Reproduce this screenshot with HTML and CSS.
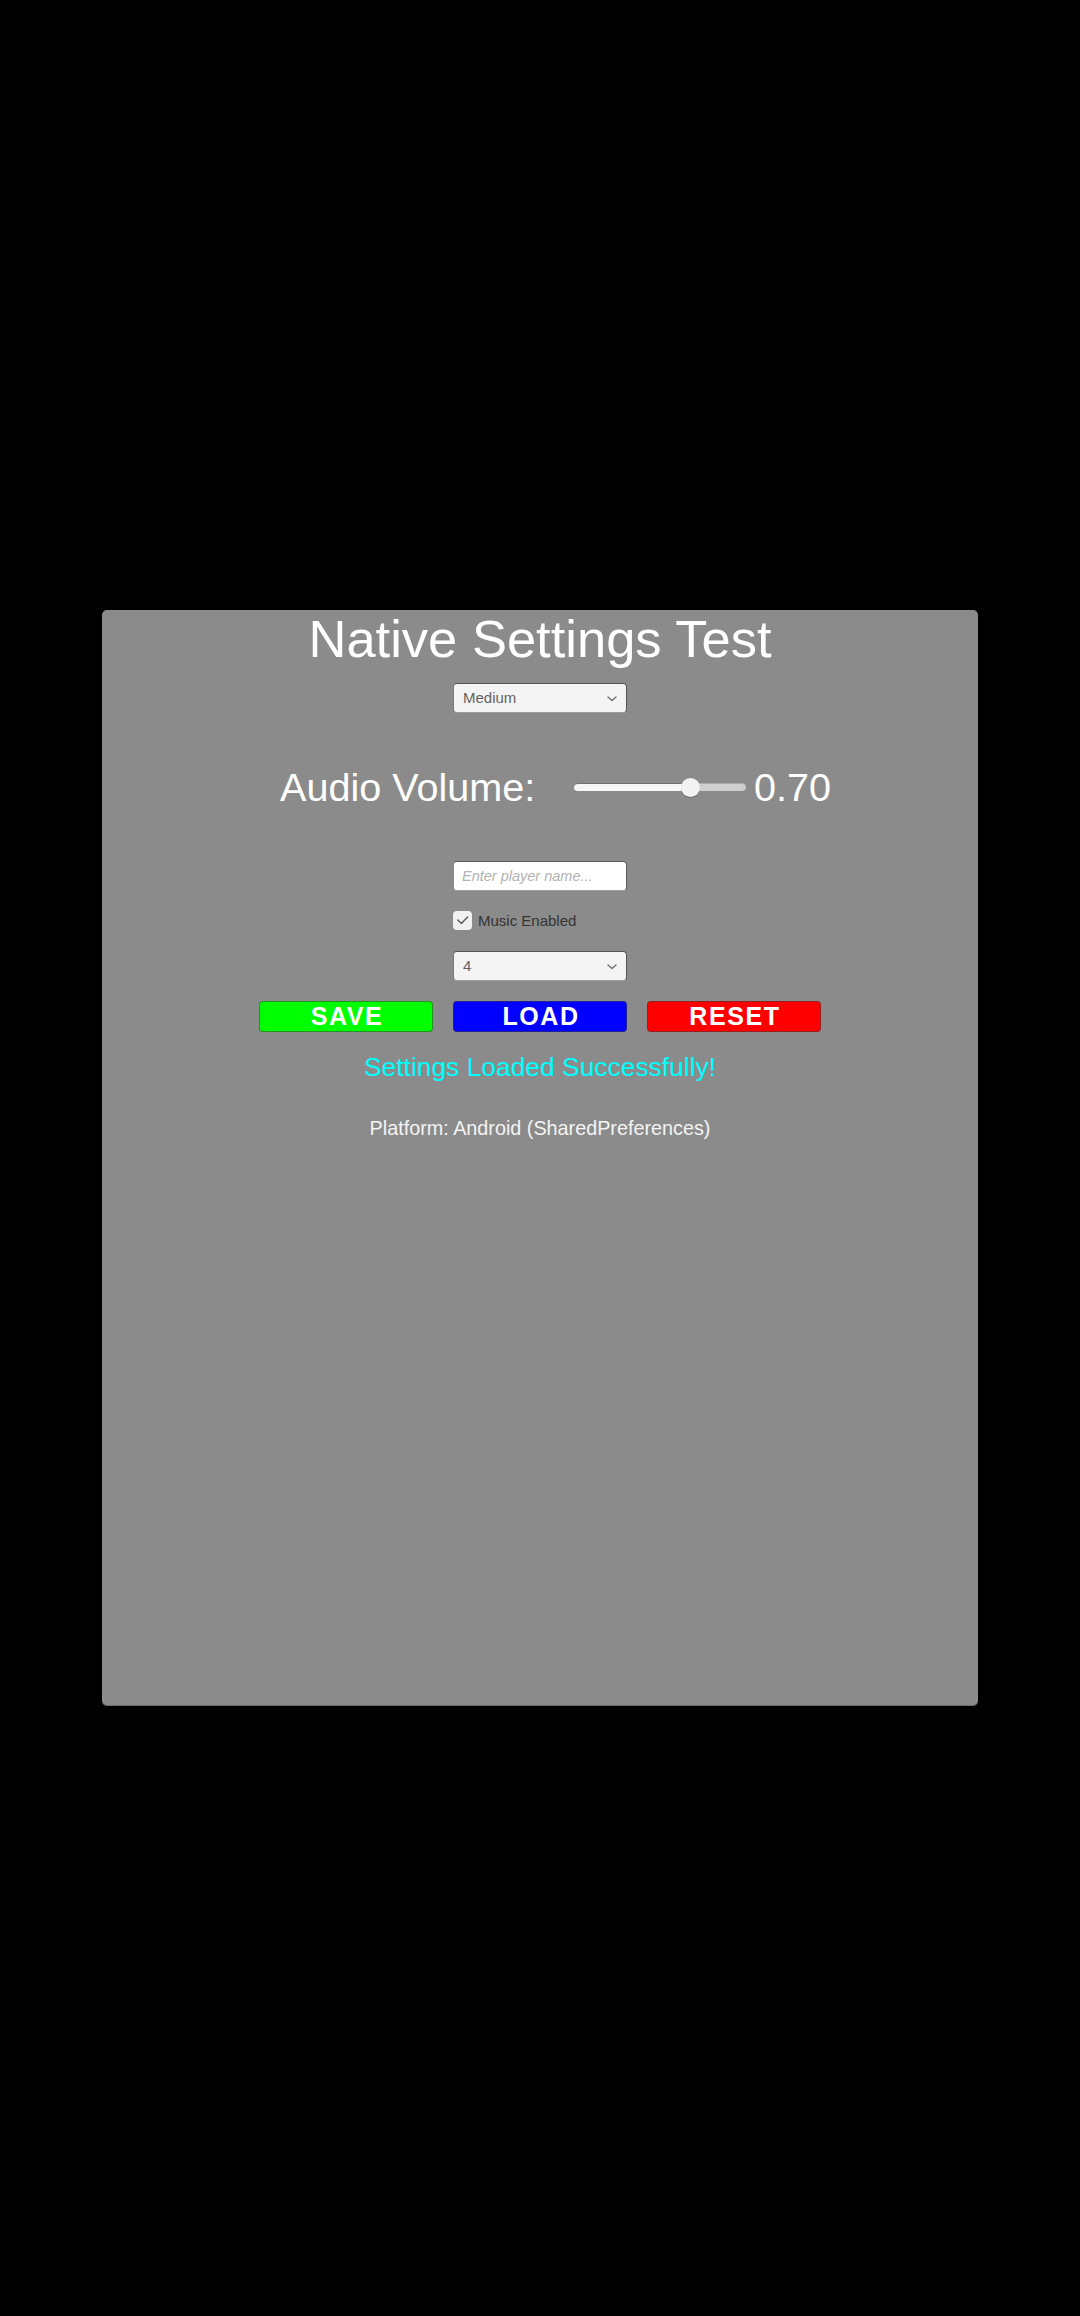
FILE: index.html
```html
<!DOCTYPE html>
<html lang="en">
<head>
<meta charset="utf-8">
<title>Native Settings Test</title>
<link rel="stylesheet" href="styles.css">
</head>
<body>
<div class="screen">
  <div class="panel">
    <h1 class="title">Native Settings Test</h1>

    <div class="dropdown dd-first">
      <span class="dd-label">Medium</span>
      <svg class="chev" viewBox="0 0 10 6" width="10" height="6"><path d="M1 1 L5 4.6 L9 1" fill="none" stroke="#6e6e6e" stroke-width="1.3" stroke-linecap="round" stroke-linejoin="round"/></svg>
    </div>

    <div class="audio-row">
      <span class="audio-label">Audio Volume:</span>
      <div class="slider" style="--v:0.7">
        <div class="slider-fill"></div>
        <div class="slider-handle"></div>
      </div>
      <span class="audio-value">0.70</span>
    </div>

    <div class="input">
      <span class="placeholder">Enter player name...</span>
    </div>

    <div class="toggle-row">
      <span class="checkbox">
        <svg viewBox="0 0 19 19" width="19" height="19"><path d="M4.8 9 L8.4 12.6 L14.6 6" fill="none" stroke="#5a5a5a" stroke-width="1.4" stroke-linecap="round" stroke-linejoin="round"/></svg>
      </span>
      <span class="toggle-label">Music Enabled</span>
    </div>

    <div class="dropdown dd-second">
      <span class="dd-label">4</span>
      <svg class="chev" viewBox="0 0 10 6" width="10" height="6"><path d="M1 1 L5 4.6 L9 1" fill="none" stroke="#6e6e6e" stroke-width="1.3" stroke-linecap="round" stroke-linejoin="round"/></svg>
    </div>

    <div class="buttons">
      <div class="btn btn-save">SAVE</div>
      <div class="btn btn-load">LOAD</div>
      <div class="btn btn-reset">RESET</div>
    </div>

    <p class="status">Settings Loaded Successfully!</p>
    <p class="platform">Platform: Android (SharedPreferences)</p>
  </div>
</div>
</body>
</html>
```

FILE: styles.css
```css
html, body {
  margin: 0;
  padding: 0;
  background: #000;
}

body {
  width: 1080px;
  height: 2316px;
  overflow: hidden;
  font-family: "Liberation Sans", Arial, sans-serif;
}

.screen {
  padding-top: 610px;
}

.panel {
  box-sizing: border-box;
  margin-left: 102px;
  width: 876px;
  height: 1096px;
  background: #8b8b8b;
  border-radius: 5px;
  box-shadow: inset 0 -1px 0 rgba(0, 0, 0, 0.22);
  padding-top: 3px;
  display: flex;
  flex-direction: column;
  align-items: center;
}

.title {
  margin: 0;
  font-size: 52.5px;
  line-height: 52px;
  font-weight: normal;
  color: #ffffff;
  text-align: center;
}

.dropdown {
  box-sizing: border-box;
  width: 174px;
  height: 30px;
  background: #f4f4f4;
  border-radius: 4px;
  border: 1px solid #555;
  border-bottom-color: #9c9c9c;
  border-left-color: #7a7a7a;
  display: flex;
  align-items: center;
  justify-content: space-between;
  padding: 0 9px 0 9px;
}

.dd-first {
  margin-top: 18px;
}

.dd-second {
  margin-top: 21px;
}

.dd-label {
  font-size: 15px;
  line-height: 28px;
  color: #636363;
}

.chev {
  display: block;
  margin-top: 1px;
}

.audio-row {
  align-self: stretch;
  margin-top: 51px;
  height: 46px;
  padding-left: 178px;
  display: flex;
  align-items: center;
}

.audio-label {
  width: 294px;
  font-size: 39.6px;
  line-height: 46px;
  color: #ffffff;
  white-space: nowrap;
}

.slider {
  position: relative;
  width: 172px;
  height: 8px;
  border-radius: 4px;
  background: #cfcfcf;
  box-shadow: inset 0 1px 0 rgba(0, 0, 0, 0.18);
}

.slider-fill {
  height: 8px;
  width: calc(10px + var(--v) * (100% - 20px));
  border-radius: 4px;
  background: #f6f6f6;
  box-shadow: inset 0 1px 0 rgba(0, 0, 0, 0.55);
}

.slider-handle {
  position: absolute;
  top: -5.5px;
  left: calc(0.5px + var(--v) * (100% - 20px));
  width: 19px;
  height: 19px;
  border-radius: 50%;
  background: #f2f2f2;
  box-shadow: 0 1px 0 rgba(0, 0, 0, 0.25);
}

.audio-value {
  margin-left: 8px;
  font-size: 39.6px;
  line-height: 46px;
  color: #ffffff;
}

.input {
  box-sizing: border-box;
  margin-top: 51px;
  width: 174px;
  height: 30px;
  background: #ffffff;
  border-radius: 4px;
  border: 1px solid #5a5a5a;
  border-bottom-color: #a0a0a0;
  border-left-color: #8a8a8a;
  display: flex;
  align-items: center;
  padding-left: 8px;
}

.placeholder {
  font-size: 14.5px;
  font-style: italic;
  color: #b2b2b2;
  white-space: nowrap;
}

.toggle-row {
  margin-top: 20px;
  width: 174px;
  height: 19px;
  display: flex;
  align-items: center;
}

.checkbox {
  width: 19px;
  height: 19px;
  border-radius: 4px;
  background: #f1f1f1;
  display: block;
}

.checkbox svg {
  display: block;
}

.toggle-label {
  margin-left: 6px;
  font-size: 15px;
  color: #343434;
  white-space: nowrap;
}

.buttons {
  margin-top: 20px;
  display: flex;
  gap: 20px;
}

.btn {
  box-sizing: border-box;
  width: 174px;
  height: 31px;
  border-radius: 4px;
  border: 1px solid rgba(60, 60, 60, 0.55);
  display: flex;
  align-items: center;
  justify-content: center;
  padding-left: 2px;
  font-size: 25px;
  font-weight: bold;
  letter-spacing: 1.6px;
  color: #ffffff;
}

.btn-save {
  background: #00ff00;
}

.btn-load {
  background: #0000ff;
}

.btn-reset {
  background: #ff0000;
}

.status {
  margin: 20px 0 0 0;
  font-size: 26.4px;
  line-height: 30px;
  color: #00ffff;
  text-align: center;
}

.platform {
  margin: 34px 0 0 0;
  font-size: 19.8px;
  line-height: 24px;
  color: #f4f4f4;
  text-align: center;
}
```
